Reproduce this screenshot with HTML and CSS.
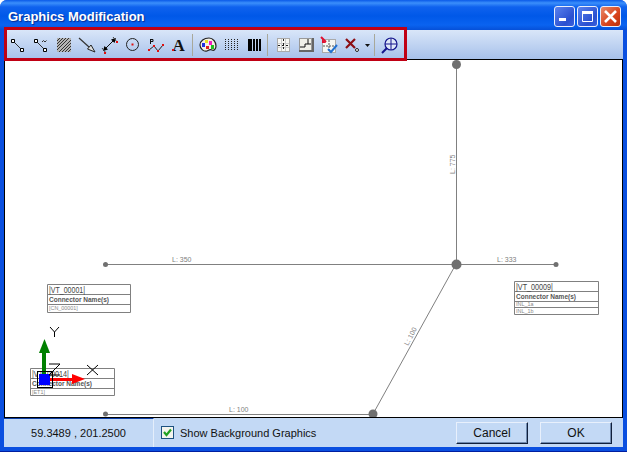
FILE: index.html
```html
<!DOCTYPE html>
<html lang="en">
<head>
  <meta charset="UTF-8">
  <title>Graphics Modification</title>
  <link rel="stylesheet" href="styles.css">
</head>
<body>
<div class="window">
  <div class="titlebar">
    <span class="title">Graphics Modification</span>
    <div class="win-btns">
      <div class="win-btn"><svg width="19" height="19" viewBox="0 0 19 19"><rect x="4" y="11" width="7" height="3" fill="#fff"/></svg></div>
      <div class="win-btn"><svg width="19" height="19" viewBox="0 0 19 19"><path d="M4.500 5.500h10v9h-10z" fill="none" stroke="#fff"/><rect x="4" y="4" width="11" height="3" fill="#fff"/></svg></div>
      <div class="win-btn close"><svg width="19" height="19" viewBox="0 0 19 19"><path d="M4 4l11 11M15 4L4 15" stroke="#fff" stroke-width="2.600"/></svg></div>
    </div>
  </div>

  <div class="toolbar">
    <!-- line -->
    <svg class="tool" viewBox="0 0 23 22"><path d="M8 8l7 7" stroke="#333"/><path d="M5.500 5.500h3v3h-3zM14.500 14.500h3v3h-3z" fill="#fff" stroke="#000"/></svg>
    <!-- polyline -->
    <svg class="tool" viewBox="0 0 23 22"><path d="M8 8l7 7" stroke="#333"/><path d="M13 8l1.500-1.500L16 8l1.500-1.500" stroke="#333" fill="none"/><path d="M5.500 5.500h3v3h-3zM14.500 14.500h3v3h-3z" fill="#fff" stroke="#000"/></svg>
    <!-- hatch -->
    <svg class="tool" viewBox="0 0 23 22"><rect x="5" y="4" width="14" height="14" fill="#b4b4b4"/><path d="M5 7l3-3M5 10l6-6M5 13l9-9M5 16l12-12M7 18L19 6M10 18l9-9M13 18l6-6M16 18l3-3" stroke="#222" stroke-width=".9"/></svg>
    <!-- arrow -->
    <svg class="tool" viewBox="0 0 23 22"><path d="M4 4l10 9" stroke="#333" stroke-width="1.200"/><path d="M12.500 15l3.500-4 4 7z" fill="#ddd" stroke="#222"/></svg>
    <!-- dimension -->
    <svg class="tool" viewBox="0 0 23 22"><path d="M7 15l9-9" stroke="#111"/><path d="M5 17l1.500-5 3.500 3.500zM18 4l-5 1.500 3.500 3.500z"/><path d="M4 14l4 5M15 3l4 5" stroke="#444"/><rect x="18" y="7" width="2" height="2" fill="#e01010"/><rect x="6" y="18" width="2" height="2" fill="#e01010"/></svg>
    <!-- circle -->
    <svg class="tool" viewBox="0 0 23 22"><circle cx="11.500" cy="10.500" r="6" fill="none" stroke="#222"/><rect x="10.500" y="9.500" width="2" height="2" fill="#e01010"/></svg>
    <!-- profile -->
    <svg class="tool" viewBox="0 0 23 22"><path d="M5 16l5-4 4 5 5-6" fill="none" stroke="#222"/><path d="M4 15h2v2H4zM9 11h2v2H9zM13 16h2v2h-2zM18 10h2v2h-2z" fill="#e01010"/><path d="M6.500 5.500h2.500v2H6.500M6.500 5v5" fill="none" stroke="#111"/></svg>
    <!-- text -->
    <svg class="tool" viewBox="0 0 23 22"><text class="tool-a" x="5.500" y="17">A</text><rect x="5" y="15" width="2" height="2" fill="#e01010"/></svg>
    <div class="sep"></div>
    <!-- palette -->
    <svg class="tool" viewBox="0 0 23 22"><path d="M4 11c0-4 4-7 9-7 4 0 7 4 7 8 0 3-2 5-4 4-2-1-3 0-5 1-3 1-7-2-7-6z" fill="#f4f0e4" stroke="#222" stroke-width="1.200"/><rect x="9" y="6" width="3" height="3" fill="#e8e020"/><rect x="13" y="7" width="3" height="4" fill="#f020c0"/><rect x="6" y="9" width="3" height="4" fill="#2030e0"/><rect x="10" y="12" width="3" height="3" fill="#e02020"/><rect x="15" y="11" width="3" height="4" fill="#20c020"/></svg>
    <!-- thin bars -->
    <svg class="tool" viewBox="0 0 23 22"><path d="M6.500 5v12M9.500 5v12M12.500 5v12M15.500 5v12M18.500 5v12" stroke="#222" stroke-dasharray="1 1"/></svg>
    <!-- thick bars -->
    <svg class="tool" viewBox="0 0 23 22"><path d="M6 5h4v12H6zM11 5h2v12h-2zM14 5h2v12h-2zM17 5h2v12h-2z"/></svg>
    <div class="sep"></div>
    <!-- grid -->
    <svg class="tool" viewBox="0 0 23 22"><rect x="6.500" y="4.500" width="12" height="13" fill="#f8f8f4" stroke="#aaa"/><path d="M10.500 5v12M14.500 5v12M7 9.500h11M7 13.500h11" stroke="#ccc"/><path d="M12.500 5v12M7 11.500h11" stroke="#222" stroke-dasharray="2 2"/></svg>
    <!-- grid route -->
    <svg class="tool" viewBox="0 0 23 22"><rect x="5.500" y="4.500" width="12" height="13" fill="#f0f0e8" stroke="#999"/><rect x="18" y="4" width="2" height="14" fill="#666"/><rect x="5" y="16" width="15" height="2" fill="#666"/><path d="M6 13h5v-3h6M14 5v5" stroke="#111" fill="none"/></svg>
    <!-- grid check -->
    <svg class="tool" viewBox="0 0 23 22"><rect x="5.500" y="5.500" width="13" height="13" fill="#f6f6f2" stroke="#aaa"/><path d="M12 6v12M6 12h12" stroke="#555" stroke-dasharray="2 1"/><path d="M4 3l5 5" stroke="#e01030" stroke-width="2"/><path d="M9 9H5V5z" fill="#e01030"/><path d="M11 15l3 3 6-7" fill="none" stroke="#2070d0" stroke-width="2"/></svg>
    <!-- delete with dropdown -->
    <svg class="tool" viewBox="0 0 23 22"><path d="M6 5l9 9M15 5l-9 9" stroke="#8c0f14" stroke-width="2.200"/><circle cx="17" cy="16" r="1.500" fill="#fff" stroke="#222"/></svg>
    <svg class="caret" viewBox="0 0 9 22"><path d="M2 10h5l-2.500 3z" fill="#111"/></svg>
    <div class="sep"></div>
    <!-- zoom grid -->
    <svg class="tool" viewBox="0 0 23 22"><circle cx="13" cy="10" r="6" fill="#dfe8f8" stroke="#14148c" stroke-width="1.200"/><path d="M13 4v12M7 10h12" stroke="#14148c"/><path d="M4 19l5-5" stroke="#14148c" stroke-width="2"/></svg>
  </div>
  <div class="tool-highlight"></div>

  <svg class="canvas" viewBox="5 60 617 357">
    <g class="wire">
      <path d="M456.500 64v200M105 264.500h451M456 264L373 414M105 414.500h268"/>
    </g>
    <g class="node">
      <circle cx="456.500" cy="64.500" r="4.500"/>
      <circle cx="456.500" cy="264.500" r="5"/>
      <circle cx="105.500" cy="264.500" r="2.500"/>
      <circle cx="556" cy="264.500" r="2.500"/>
      <circle cx="373" cy="414" r="4.500"/>
      <circle cx="105.500" cy="414" r="2.500"/>
    </g>
    <text class="len" x="172" y="262">L: 350</text>
    <text class="len" x="497" y="262">L: 333</text>
    <text class="len" x="229" y="412">L: 100</text>
    <text class="len" transform="translate(455 174) rotate(-90)">L: 775</text>
    <text class="len" transform="translate(408 346) rotate(-62)">L: 100</text>

    <g class="tag">
      <path d="M47.500 284.500h83v28h-83zM47.500 294.500h83M47.500 304.500h83"/>
    </g>
    <text class="tag-id" x="49" y="293" textLength="36" lengthAdjust="spacingAndGlyphs">|VT_00001|</text>
    <text class="tag-name" x="49" y="302">Connector Name(s)</text>
    <text class="tag-sub" x="49" y="310">[CN_00001]</text>

    <g class="tag">
      <path d="M514.500 281.500h84v33h-84zM514.500 291.500h84M514.500 301.500h84M514.500 307.500h84"/>
    </g>
    <text class="tag-id" x="516" y="290" textLength="37" lengthAdjust="spacingAndGlyphs">|VT_00009|</text>
    <text class="tag-name" x="516" y="299">Connector Name(s)</text>
    <text class="tag-sub" x="516" y="306">INL_1a</text>
    <text class="tag-sub" x="516" y="313">INL_1b</text>

    <g class="tag">
      <path d="M30.500 368.500h84v27h-84zM30.500 378.500h84M30.500 388.500h84"/>
    </g>
    <text class="tag-id" x="32" y="377" textLength="37" lengthAdjust="spacingAndGlyphs">|VT_00014|</text>
    <text class="tag-name" x="32" y="386">Connector Name(s)</text>
    <text class="tag-sub" x="32" y="394">[ET1]</text>

    <!-- axis gizmo -->
    <rect x="42" y="352" width="4" height="24" fill="#008000"/>
    <path d="M44.500 339l5.500 14H39z" fill="#008000"/>
    <rect x="50" y="378" width="24" height="3" fill="#ff0000"/>
    <path d="M72 374l13 5-13 5z" fill="#ff0000"/>
    <rect x="37.500" y="371.500" width="15" height="16" fill="none" stroke="#000"/>
    <rect x="39" y="374" width="11" height="11" fill="#0000ff"/>
    <path class="axis" d="M50 327l4.500 5 4.500-5M54.500 332v5M49 364h11l-11 11h11M87 365l11 10M98 365l-11 10"/>
  </svg>

  <div class="statusbar">
    <div class="coords">59.3489 , 201.2500</div>
    <label class="show-bg">
      <span class="check"><svg width="11" height="11" viewBox="0 0 11 11"><path d="M2 5l2.500 3L9 2.500" fill="none" stroke="#21a121" stroke-width="2.200"/></svg></span>
      Show Background Graphics
    </label>
    <div class="actions">
      <button class="btn">Cancel</button>
      <button class="btn">OK</button>
    </div>
  </div>
</div>
</body>
</html>
```

FILE: styles.css
```css
html, body { margin: 0; padding: 0; }
body { width: 627px; height: 452px; overflow: hidden; font-family: "Liberation Sans", Arial, sans-serif; }

.window {
  position: relative;
  width: 627px; height: 452px;
  box-sizing: border-box;
  display: flex; flex-direction: column;
  background: #0a4fe0;
  padding: 0 4px 4px;
  border-radius: 7px 7px 0 0;
  border-bottom: 1px solid #001ea0;
}

.titlebar {
  height: 30px; flex: none;
  margin: 0 -4px;
  padding: 0 6px 0 8px;
  display: flex; align-items: center; justify-content: space-between;
  border-radius: 7px 7px 0 0;
  background: linear-gradient(#0a5ae8 0, #3b8ffb 3px, #0f62ee 7px, #0058e8 16px, #0a63f0 25px, #0650d8 30px);
}
.title {
  color: #fff; font: bold 13px "Liberation Sans", sans-serif;
  text-shadow: 1px 1px 1px #0a2a90;
  margin-top: 3px;
}
.win-btns { display: flex; gap: 2px; margin-top: 2px; }
.win-btn {
  width: 21px; height: 21px;
  box-sizing: border-box;
  border: 1px solid #e8eefc;
  border-radius: 3px;
  background: linear-gradient(135deg, #5a82ee, #2a50d0 70%, #3a60dc);
}
.win-btn svg { display: block; }
.win-btn.close { background: linear-gradient(135deg, #e8896a, #d8431c 60%, #b8300c); }

.toolbar {
  height: 29px; flex: none;
  box-sizing: border-box;
  display: flex; align-items: flex-start;
  padding: 4px 0 0 2px;
  background: linear-gradient(#d9e6f9, #a7c1ea);
}
.tool { width: 23px; height: 22px; flex: none; }
.tool-a { font: bold 17px "Liberation Serif", serif; fill: #111; }
.caret { width: 9px; height: 22px; flex: none; }
.sep { width: 1px; height: 22px; margin: 0 3px 0 2px; background: #a8a89a; flex: none; }

.tool-highlight {
  position: absolute;
  left: 4px; top: 27px;
  width: 403px; height: 34px;
  box-sizing: border-box;
  border: 3px solid #c00014;
}

.canvas {
  flex: 1; min-height: 0;
  display: block;
  width: 619px;
  box-sizing: border-box;
  background: #fff;
  border: 1px solid #000;
}
.wire path { fill: none; stroke: #808080; }
.node circle { fill: #707070; }
.len { font-size: 7px; fill: #808080; }
.tag path { fill: none; stroke: #808080; }
.tag-id { font-size: 9.500px; fill: #444; }
.tag-name { font-size: 6.500px; fill: #555; font-weight: bold; }
.tag-sub { font-size: 5.400px; fill: #888; }
.axis { fill: none; stroke: #000; }

.statusbar {
  height: 29px; flex: none;
  display: flex; align-items: center;
  background: #c3d9f5;
  font-size: 11px; color: #111;
}
.coords {
  width: 150px; height: 100%;
  box-sizing: border-box;
  display: flex; align-items: center; justify-content: center;
  border-top: 1px solid #0a3ea8;
  border-right: 1px solid #e4eefb;
}
.show-bg { display: flex; align-items: center; gap: 6px; margin-left: 7px; }
.check {
  width: 13px; height: 13px; box-sizing: border-box;
  border: 1px solid #1c5180; background: #f4f4ee;
}
.check svg { display: block; }
.actions { margin-left: auto; display: flex; gap: 12px; padding-right: 11px; margin-top: 1px; }
.btn {
  width: 72px; height: 22px;
  font: 12px "Liberation Sans", sans-serif; color: #111;
  background: #c3d9f5;
  border: 1px solid;
  border-color: #e8f0fc #10203c #10203c #e8f0fc;
  box-shadow: inset -1px -1px 0 #6f8ab0;
  padding: 0;
}
```
